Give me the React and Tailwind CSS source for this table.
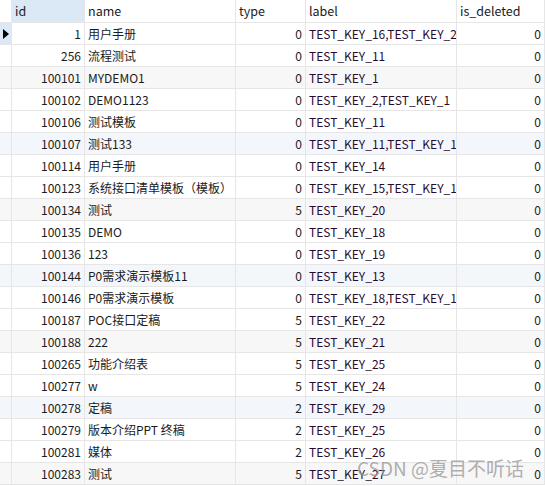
import React from 'react';

const rows = [
  [1, '用户手册', 0, 'TEST_KEY_16,TEST_KEY_20', 0],
  [256, '流程测试', 0, 'TEST_KEY_11', 0],
  [100101, 'MYDEMO1', 0, 'TEST_KEY_1', 0],
  [100102, 'DEMO1123', 0, 'TEST_KEY_2,TEST_KEY_1', 0],
  [100106, '测试模板', 0, 'TEST_KEY_11', 0],
  [100107, '测试133', 0, 'TEST_KEY_11,TEST_KEY_10', 0],
  [100114, '用户手册', 0, 'TEST_KEY_14', 0],
  [100123, '系统接口清单模板（模板）', 0, 'TEST_KEY_15,TEST_KEY_16', 0],
  [100134, '测试', 5, 'TEST_KEY_20', 0],
  [100135, 'DEMO', 0, 'TEST_KEY_18', 0],
  [100136, '123', 0, 'TEST_KEY_19', 0],
  [100144, 'P0需求演示模板11', 0, 'TEST_KEY_13', 0],
  [100146, 'P0需求演示模板', 0, 'TEST_KEY_18,TEST_KEY_12', 0],
  [100187, 'POC接口定稿', 5, 'TEST_KEY_22', 0],
  [100188, '222', 5, 'TEST_KEY_21', 0],
  [100265, '功能介绍表', 5, 'TEST_KEY_25', 0],
  [100277, 'w', 5, 'TEST_KEY_24', 0],
  [100278, '定稿', 2, 'TEST_KEY_29', 0],
  [100279, '版本介绍PPT 终稿', 2, 'TEST_KEY_25', 0],
  [100281, '媒体', 2, 'TEST_KEY_26', 0],
  [100283, '测试', 5, 'TEST_KEY_27', 0],
];

const grid = 'grid grid-cols-[12px_73px_151px_70px_151px_88px]';
const cell = 'border-r border-b border-[#e6e6e6] px-[3px] whitespace-nowrap overflow-hidden leading-[21px]';

function rowBg(i) {
  const n = i + 1;
  if (n % 6 === 0) return 'bg-[#f3f7fc]';
  if (n % 3 === 0) return 'bg-[#f7f7f7]';
  return 'bg-white';
}

export default function App() {
  return (
    <div
      className="relative w-[545px] h-[486px] bg-white overflow-hidden text-[12px] text-[#1b1b1b]"
      style={{ fontFamily: '"Noto Sans CJK SC", "Noto Sans", sans-serif' }}
    >
      <div className={`${grid} h-[23px]`}>
        <div className="border-r border-b border-[#e6e6e6]" />
        <div className={`${cell} leading-[22px] text-[12.5px] bg-[#dbe9f6]`}>id</div>
        <div className={`${cell} leading-[22px] text-[12.5px]`}>name</div>
        <div className={`${cell} leading-[22px] text-[12.5px]`}>type</div>
        <div className={`${cell} leading-[22px] text-[12.5px]`}>label</div>
        <div className={`${cell} leading-[22px] text-[12.5px]`}>is_deleted</div>
      </div>
      {rows.map((r, i) => (
        <div key={r[0]} className={`${grid} h-[22px] ${rowBg(i)}`}>
          <div className={`border-r border-b border-[#e6e6e6] flex items-center justify-center ${i === 0 ? 'bg-[#dbe9f6]' : ''}`}>
            {i === 0 && (
              <svg width="6" height="10" viewBox="0 0 6 10">
                <path d="M0 0 L6 5 L0 10 Z" fill="#000" />
              </svg>
            )}
          </div>
          <div className={`${cell} text-right`}>{r[0]}</div>
          <div className={cell}>{r[1]}</div>
          <div className={`${cell} text-right`}>{r[2]}</div>
          <div className={`${cell} text-[#2a0a2e]`}>{r[3]}</div>
          <div className={`${cell} text-right`}>{r[4]}</div>
        </div>
      ))}
      <div className="absolute left-[357px] top-[454px] text-[19px] leading-[27px] text-[#9a9a9a]/80 whitespace-nowrap">
        CSDN @夏目不听话
      </div>
    </div>
  );
}
